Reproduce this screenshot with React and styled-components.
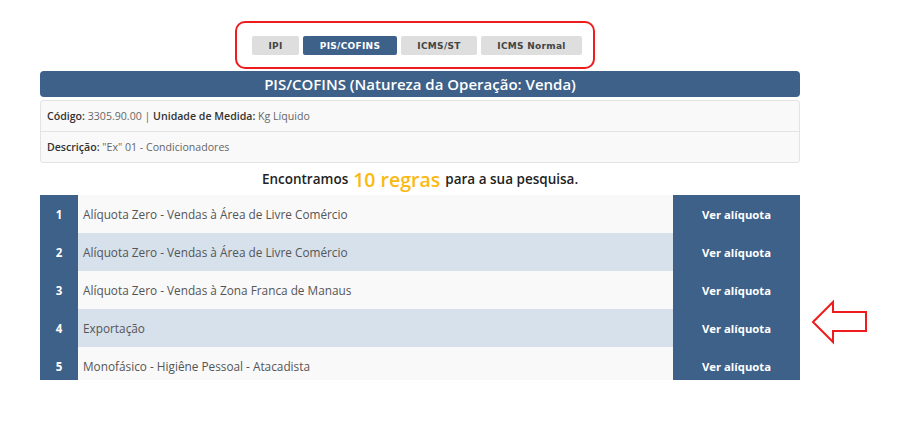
import React from 'react';
import styled, { createGlobalStyle } from 'styled-components';

const GlobalStyle = createGlobalStyle`
  html, body {
    margin: 0;
    padding: 0;
    background: #ffffff;
    font-family: "Open Sans", "Liberation Sans", sans-serif;
  }
`

const BLUE = '#3d6189';

const Page = styled.div`
  position: relative;
  width: 920px;
  height: 426px;
  padding: 21px 0 0 40px;
  box-sizing: border-box;
  overflow: hidden;
`

const Content = styled.div`
  width: 760px;
`

const TabsFrame = styled.div`
  box-sizing: border-box;
  width: 360px;
  height: 48px;
  margin-left: 195px;
  padding: 13px 0 0 15px;
  border: 2px solid #ee1c1c;
  border-radius: 10px;
  display: flex;
  gap: 4px;
`

const Tab = styled.div`
  width: ${p => p.w}px;
  height: 19px;
  display: flex;
  align-items: center;
  justify-content: center;
  border-radius: 2px;
  background: ${p => p.active ? BLUE : '#dedede'};
  color: ${p => p.active ? '#ffffff' : '#444444'};
  font-family: "DejaVu Sans", Verdana, sans-serif;
  font-weight: bold;
  font-size: 9px;
  letter-spacing: 0.3px;
`

const TitleBar = styled.div`
  margin-top: 2px;
  height: 26px;
  border-radius: 4px;
  background: ${BLUE};
  color: #ffffff;
  font-size: 15px;
  font-weight: 600;
  display: flex;
  align-items: center;
  justify-content: center;
`

const InfoPanel = styled.div`
  margin-top: 3px;
  border: 1px solid #e3e3e3;
  border-radius: 3px;
  background: #f9f9f9;
`

const InfoRow = styled.div`
  height: 30px;
  display: flex;
  align-items: center;
  padding-left: 6px;
  font-size: 10.6px;
  color: #666666;
  & + & {
    border-top: 1px solid #e3e3e3;
  }
  b {
    font-weight: 600;
    color: #333333;
  }
`

const Found = styled.div`
  height: 32px;
  display: flex;
  align-items: center;
  justify-content: center;
  gap: 5px;
  font-size: 13.5px;
  font-weight: 600;
  color: #222222;
  span {
    font-size: 19.5px;
    color: #fbb913;
  }
`

const TableClip = styled.div`
  height: 185px;
  overflow: hidden;
`

const Row = styled.div`
  height: 38px;
  display: grid;
  grid-template-columns: 38px 1fr 127px;
  background: ${p => p.alt ? '#d6e1ec' : '#f9f9f9'};
`

const Num = styled.div`
  background: ${BLUE};
  color: #ffffff;
  font-weight: 700;
  font-size: 11.5px;
  display: flex;
  align-items: center;
  justify-content: center;
`

const Label = styled.div`
  display: flex;
  align-items: center;
  padding-left: 5px;
  color: #555555;
  font-size: 11.8px;
`

const ViewButton = styled.div`
  background: ${BLUE};
  color: #ffffff;
  font-weight: 700;
  font-size: 11.3px;
  display: flex;
  align-items: center;
  justify-content: center;
`

const Arrow = styled.svg`
  position: absolute;
  left: 810px;
  top: 299px;
`

const tabs = [
  { label: 'IPI', w: 47 },
  { label: 'PIS/COFINS', w: 94, active: true },
  { label: 'ICMS/ST', w: 76 },
  { label: 'ICMS Normal', w: 101 },
];

const rules = [
  'Alíquota Zero - Vendas à Área de Livre Comércio',
  'Alíquota Zero - Vendas à Área de Livre Comércio',
  'Alíquota Zero - Vendas à Zona Franca de Manaus',
  'Exportação',
  'Monofásico - Higiêne Pessoal - Atacadista',
];

export default function App() {
  return (
    <Page>
      <GlobalStyle />
      <Content>
        <TabsFrame>
          {tabs.map(t => (
            <Tab key={t.label} w={t.w} active={t.active}>{t.label}</Tab>
          ))}
        </TabsFrame>
        <TitleBar>PIS/COFINS (Natureza da Operação: Venda)</TitleBar>
        <InfoPanel>
          <InfoRow><b>Código:</b>&nbsp;3305.90.00 |&nbsp;<b>Unidade de Medida:</b>&nbsp;Kg Líquido</InfoRow>
          <InfoRow><b>Descrição:</b>&nbsp;"Ex" 01 - Condicionadores</InfoRow>
        </InfoPanel>
        <Found>Encontramos <span>10 regras</span> para a sua pesquisa.</Found>
        <TableClip>
          {rules.map((r, i) => (
            <Row key={i} alt={i % 2 === 1}>
              <Num>{i + 1}</Num>
              <Label>{r}</Label>
              <ViewButton>Ver alíquota</ViewButton>
            </Row>
          ))}
        </TableClip>
      </Content>
      <Arrow width="60" height="46" viewBox="0 0 60 46">
        <polygon points="3,23 23,3 23,13 56,13 56,32 23,32 23,43" fill="#ffffff" stroke="#ee1c1c" strokeWidth="2" />
      </Arrow>
    </Page>
  );
}
